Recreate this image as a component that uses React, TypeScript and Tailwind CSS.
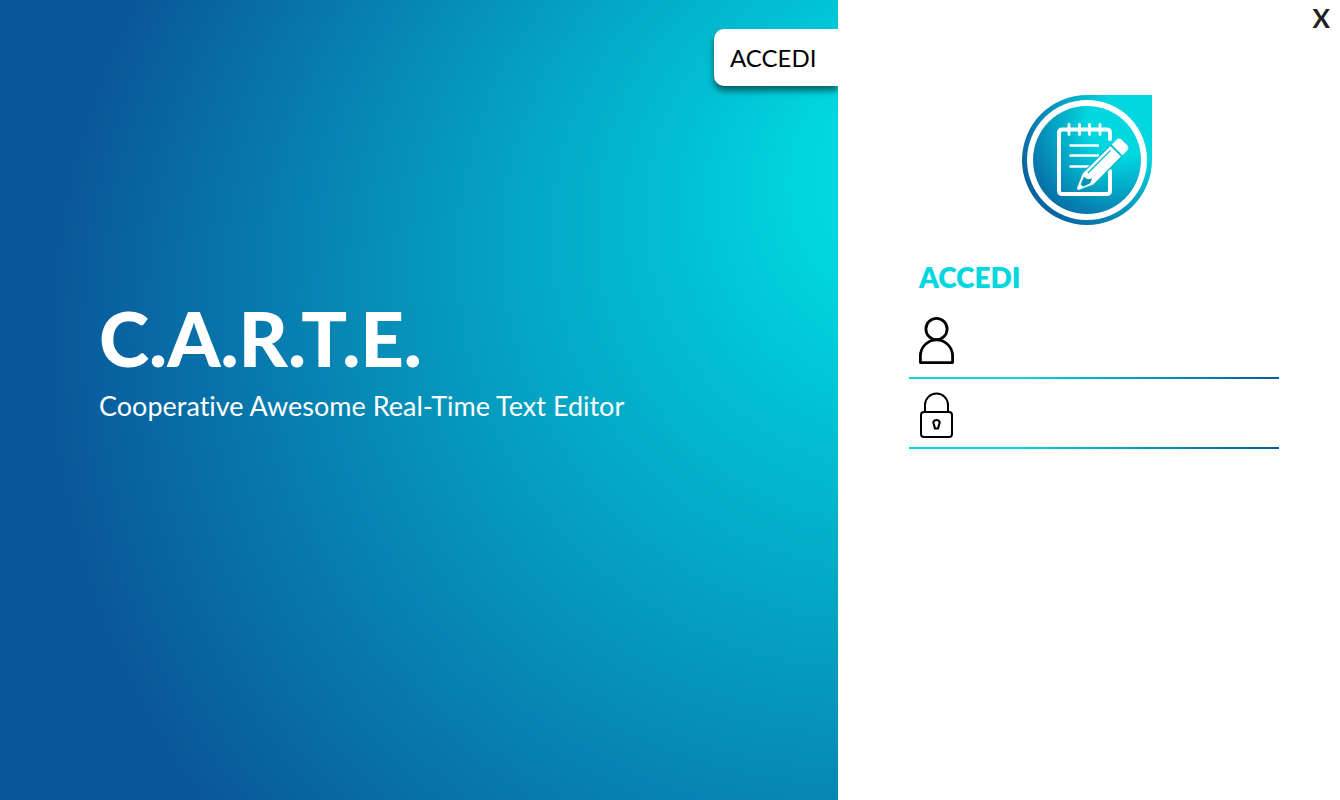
import { useId } from "react";

function PanelBackground() {
  return (
    <svg
      aria-hidden="true"
      className="absolute inset-0 h-full w-full"
      viewBox="0 0 838 800"
      preserveAspectRatio="none"
    >
      <defs>
        <radialGradient id="panel" gradientUnits="userSpaceOnUse" cx="792" cy="352" r="756" fx="962" fy="143">
          <stop offset="0.157" stopColor="#00d7e0" />
          <stop offset="1" stopColor="#0a5599" />
        </radialGradient>
      </defs>
      <rect width="838" height="800" fill="url(#panel)" />
    </svg>
  );
}

function Logo() {
  return (
    <svg role="img" aria-label="C.A.R.T.E." className="h-[130px] w-[130px]" viewBox="0 0 130 130">
      <defs>
        <radialGradient id="drop" gradientUnits="userSpaceOnUse" cx="118" cy="28" r="138" fx="124" fy="22">
          <stop offset="0.3" stopColor="#00d7e0" />
          <stop offset="1" stopColor="#0a5599" />
        </radialGradient>
        <radialGradient id="disc" gradientUnits="userSpaceOnUse" cx="98" cy="34" r="116" fx="102" fy="24">
          <stop offset="0.3" stopColor="#00d7e0" />
          <stop offset="1" stopColor="#0a5599" />
        </radialGradient>
      </defs>
      <path d="M65 0H130V65A65 65 0 1 1 65 0Z" fill="url(#drop)" />
      <circle cx="65" cy="65" r="60" fill="#fff" />
      <circle cx="65" cy="65" r="54" fill="url(#disc)" />
      <g fill="none" stroke="#fff" strokeLinecap="round" strokeLinejoin="round">
        <path
          strokeWidth="4"
          d="M88 44V38Q88 34.500 84.500 34.500H40.500Q37 34.500 37 38V95.500Q37 99 40.500 99H84.500Q88 99 88 95.500V76"
        />
        <path strokeWidth="2.800" d="M47 29.500V39.500M57.500 29.500V39.500M67.500 29.500V39.500M78 29.500V39.500" />
        <path strokeWidth="2.500" strokeLinecap="butt" d="M47.500 50.500H77M47.500 60.500H77M47.500 71.500H68" />
      </g>
      <g transform="translate(55.500 94.500) rotate(-45)">
        <path d="M14 -7.500H54V7.500H14Z" fill="#02b6cd" stroke="#02b6cd" strokeWidth="2.400" strokeLinejoin="round" />
        <path d="M0 0Q0 -1 1 -1.500L15 -7.500H54V7.500H15L1 1.500Q0 1 0 0Z" fill="#fff" />
        <path d="M6 -1.500L13.500 -4.500L14.500 0L18 2.500L13.500 4.500L6 2Z" fill="#0594b9" />
        <path d="M19 -4.300H51" stroke="#02b6cd" strokeWidth="1.300" />
        <path d="M56 -7.500H62.500Q66.500 -7.500 66.500 -3.500V3.500Q66.500 7.500 62.500 7.500H56Z" fill="#fff" />
      </g>
    </svg>
  );
}

function UserIcon() {
  return (
    <svg
      aria-hidden="true"
      className="h-12 w-9 shrink-0"
      viewBox="0 0 36 48"
      fill="none"
      stroke="#000"
      strokeWidth="2.800"
      strokeLinejoin="round"
    >
      <circle cx="18.500" cy="12" r="10.600" />
      <path d="M2.400 45.600V39A16.100 16.100 0 0 1 34.600 39V45.600Z" />
    </svg>
  );
}

function LockIcon() {
  return (
    <svg
      aria-hidden="true"
      className="h-12 w-9 shrink-0"
      viewBox="0 0 36 48"
      fill="none"
      stroke="#000"
      strokeWidth="2"
    >
      <rect x="3" y="21" width="31" height="25" rx="3" />
      <path d="M7 21V14A11.500 11.500 0 0 1 30 14V21" />
      <path strokeWidth="2.200" d="M18.500 29C15.500 29 14.500 32 16 34L17 37.500H20L21 34C22.500 32 21.500 29 18.500 29Z" />
    </svg>
  );
}

function Field({ label, type, icon }: { label: string; type: string; icon: React.ReactNode }) {
  const id = useId();
  return (
    <div className="flex items-center gap-3 px-[9px]">
      <label htmlFor={id} aria-label={label}>
        {icon}
      </label>
      <input id={id} type={type} className="h-12 min-w-0 flex-1 bg-transparent text-2xl outline-none" />
    </div>
  );
}

function Rule() {
  return <div className="h-0.5 bg-linear-to-r from-[#00d7e0] from-30% to-[#0a5b9c]" />;
}

export default function App() {
  return (
    <div className="flex min-h-screen bg-white font-['Lato',sans-serif] [font-variant-ligatures:none]">
      <section className="relative flex flex-1 flex-col">
        <PanelBackground />
        <div className="relative flex justify-end overflow-hidden pt-[29px] pb-4">
          <button className="h-[57px] w-[124px] rounded-l-[10px] bg-white pl-4 text-left text-[24px] text-black shadow-[0_5px_6px_rgba(0,0,0,0.5)]">
            ACCEDI
          </button>
        </div>
        <div className="relative mt-[196px] pl-[99px] text-white">
          <h1 className="text-[76px] leading-20 font-black">C.A.R.T.E.</h1>
          <p className="mt-3 text-[27px] leading-8">Cooperative Awesome Real-Time Text Editor</p>
        </div>
      </section>

      <main className="flex w-[502px] flex-col">
        <div className="flex h-[95px] items-start justify-end">
          <button aria-label="Chiudi" className="px-2.5 text-[26px] leading-9 font-bold text-[#222]">
            X
          </button>
        </div>
        <div className="flex justify-center pr-1">
          <Logo />
        </div>
        <form className="mt-8 mr-[61px] ml-[71px]">
          <h2 className="px-2.5 text-[28px] leading-10 font-extrabold text-[#00d7e0]">ACCEDI</h2>
          <div className="mt-5">
            <Field label="Nome utente" type="text" icon={<UserIcon />} />
            <div className="mt-3">
              <Rule />
            </div>
          </div>
          <div className="mt-3">
            <Field label="Password" type="password" icon={<LockIcon />} />
            <div className="mt-2">
              <Rule />
            </div>
          </div>
        </form>
      </main>
    </div>
  );
}
